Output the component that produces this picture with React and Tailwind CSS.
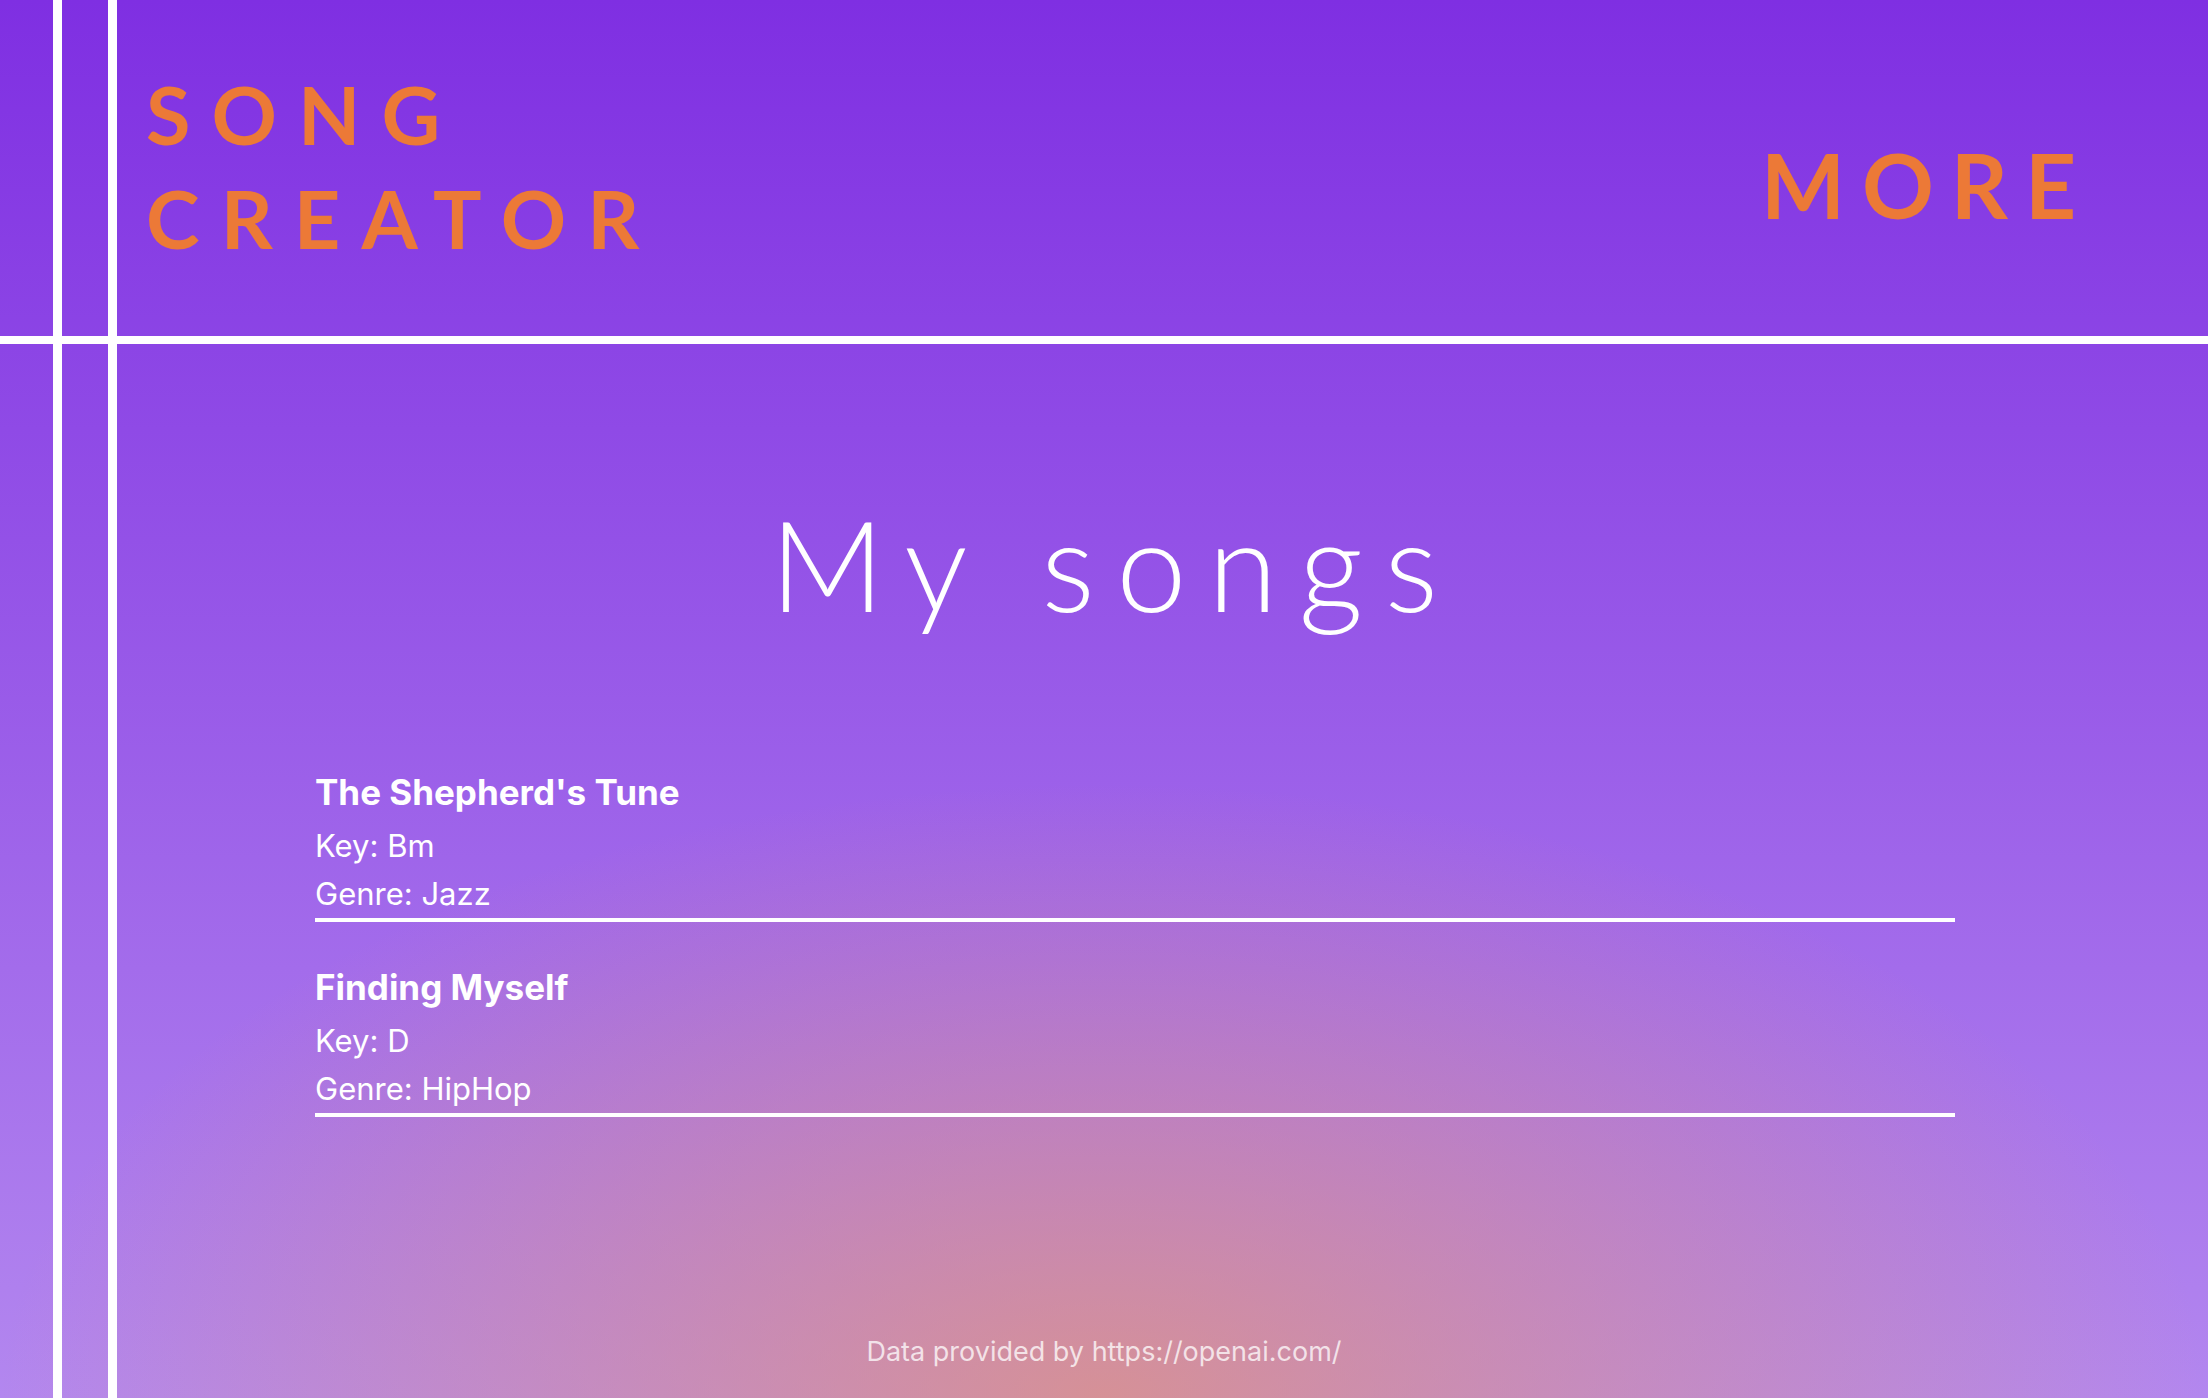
const songs = [
  { title: "The Shepherd's Tune", key: "Bm", genre: "Jazz" },
  { title: "Finding Myself", key: "D", genre: "HipHop" },
];

const App = () => {
  return (
    <div className="relative min-h-screen flex flex-col overflow-hidden bg-[radial-gradient(ellipse_50%_44%_at_50%_100%,rgba(232,150,105,0.66),rgba(232,150,105,0)),linear-gradient(to_bottom,#7f2fe2,#b387ef)] font-['Inter','Liberation_Sans',sans-serif]">
      {/* Header */}
      <header className="h-[344px] border-b-8 border-white flex justify-between pl-[146px] pr-[115px]">
        <h1 className="pt-[62px] font-['Lato','Liberation_Sans',sans-serif] font-bold text-[81px] leading-[104px] tracking-[0.26em] text-[#ec7937]">
          SONG
          <br />
          CREATOR
        </h1>
        <nav className="pt-[133px] pl-1 font-['Lato','Liberation_Sans',sans-serif] font-bold text-[89px] leading-[104px] tracking-[0.19em] text-[#ec7937]">
          MORE
        </nav>
      </header>

      {/* Main */}
      <main className="flex-1 flex flex-col">
        <h2 className="mt-[157px] pl-[0.17em] text-center font-['Lato','Liberation_Sans',sans-serif] font-light text-[126px] leading-none tracking-[0.17em] text-white">
          My songs
        </h2>

        <ul className="mt-[141px] ml-[315px] w-[1640px] text-white">
          {songs.map((song) => (
            <li key={song.title} className="border-b-4 border-white mb-[41px]">
              <h3 className="text-[35px] leading-[48px] font-bold mb-[6px]">
                {song.title}
              </h3>
              <p className="text-[31px] leading-[48px]">Key: {song.key}</p>
              <p className="text-[31px] leading-[48px]">Genre: {song.genre}</p>
            </li>
          ))}
        </ul>
      </main>

      <footer className="pb-[27px] text-center text-[27px] leading-[39px] text-white/75">
        Data provided by https://openai.com/
      </footer>

      {/* Decorative lines */}
      <div className="absolute top-0 bottom-0 left-[53px] w-[9px] bg-white" />
      <div className="absolute top-0 bottom-0 left-[108px] w-[9px] bg-white" />
    </div>
  );
};

export default App;
